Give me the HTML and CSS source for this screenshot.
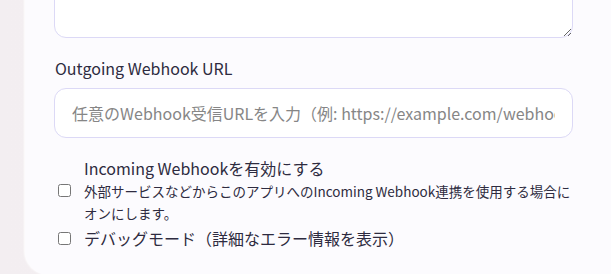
FILE: index.html
```html
<!DOCTYPE html>
<html lang="ja">
<head>
  <meta charset="UTF-8">
  <meta name="viewport" content="width=device-width, initial-scale=1.0">
  <title>Webhook設定</title>
  <link rel="stylesheet" href="styles.css">
</head>
<body>
  <div class="panel">
    <textarea class="field memo"></textarea>

    <label class="field-label" for="outgoing">Outgoing Webhook URL</label>
    <input class="field" type="text" id="outgoing" placeholder="任意のWebhook受信URLを入力（例: https://example.com/webhook）">

    <label class="check-row">
      <input type="checkbox" id="incoming">
      <span class="check-text">
        <span class="check-title">Incoming Webhookを有効にする</span>
        <span class="check-help">外部サービスなどからこのアプリへのIncoming Webhook連携を使用する場合に<br>オンにします。</span>
      </span>
    </label>

    <label class="check-row">
      <input type="checkbox" id="debug">
      <span class="check-text">
        <span class="check-title">デバッグモード（詳細なエラー情報を表示）</span>
      </span>
    </label>
  </div>
</body>
</html>
```

FILE: styles.css
```css
body {
  font-family: "Noto Sans CJK JP", "Noto Sans", sans-serif;
  background: linear-gradient(90deg, #f3eef1 0%, #f6f2f4 100%);
  margin: 0;
  padding: 0;
  overflow: hidden;
  color: #2e2b40;
}

.panel {
  background: #fcfbfe;
  margin: -72px 0 0 25px;
  padding: 29px 38px 25px 29px;
  border-radius: 0 0 0 24px;
  box-shadow: -1px 0 2px rgba(255,255,255,0.9);
  display: flex;
  flex-direction: column;
}

.field {
  box-sizing: border-box;
  width: 100%;
  border: 1px solid #dcd9f6;
  border-radius: 12px;
  background: #fff;
  font-family: inherit;
  font-size: 16px;
  color: #2e2b40;
}

.memo {
  height: 81px;
  resize: vertical;
}

.field-label {
  font-size: 16px;
  line-height: 24px;
  margin: 18px 0 8px 1px;
}

input.field {
  height: 50px;
  padding: 0 17px;
  outline: none;
}

input.field::placeholder {
  color: #868686;
}

.check-row {
  display: flex;
  align-items: center;
  margin-top: 2px;
}

input.field + .check-row {
  margin-top: 18px;
}

.check-row input {
  margin: 0 13px 0 4px;
  width: 13px;
  height: 13px;
}

.check-text {
  display: flex;
  flex-direction: column;
}

.check-title {
  font-size: 16px;
  line-height: 24px;
}

.check-help {
  font-size: 13.5px;
  line-height: 22px;
  white-space: nowrap;
}
```
